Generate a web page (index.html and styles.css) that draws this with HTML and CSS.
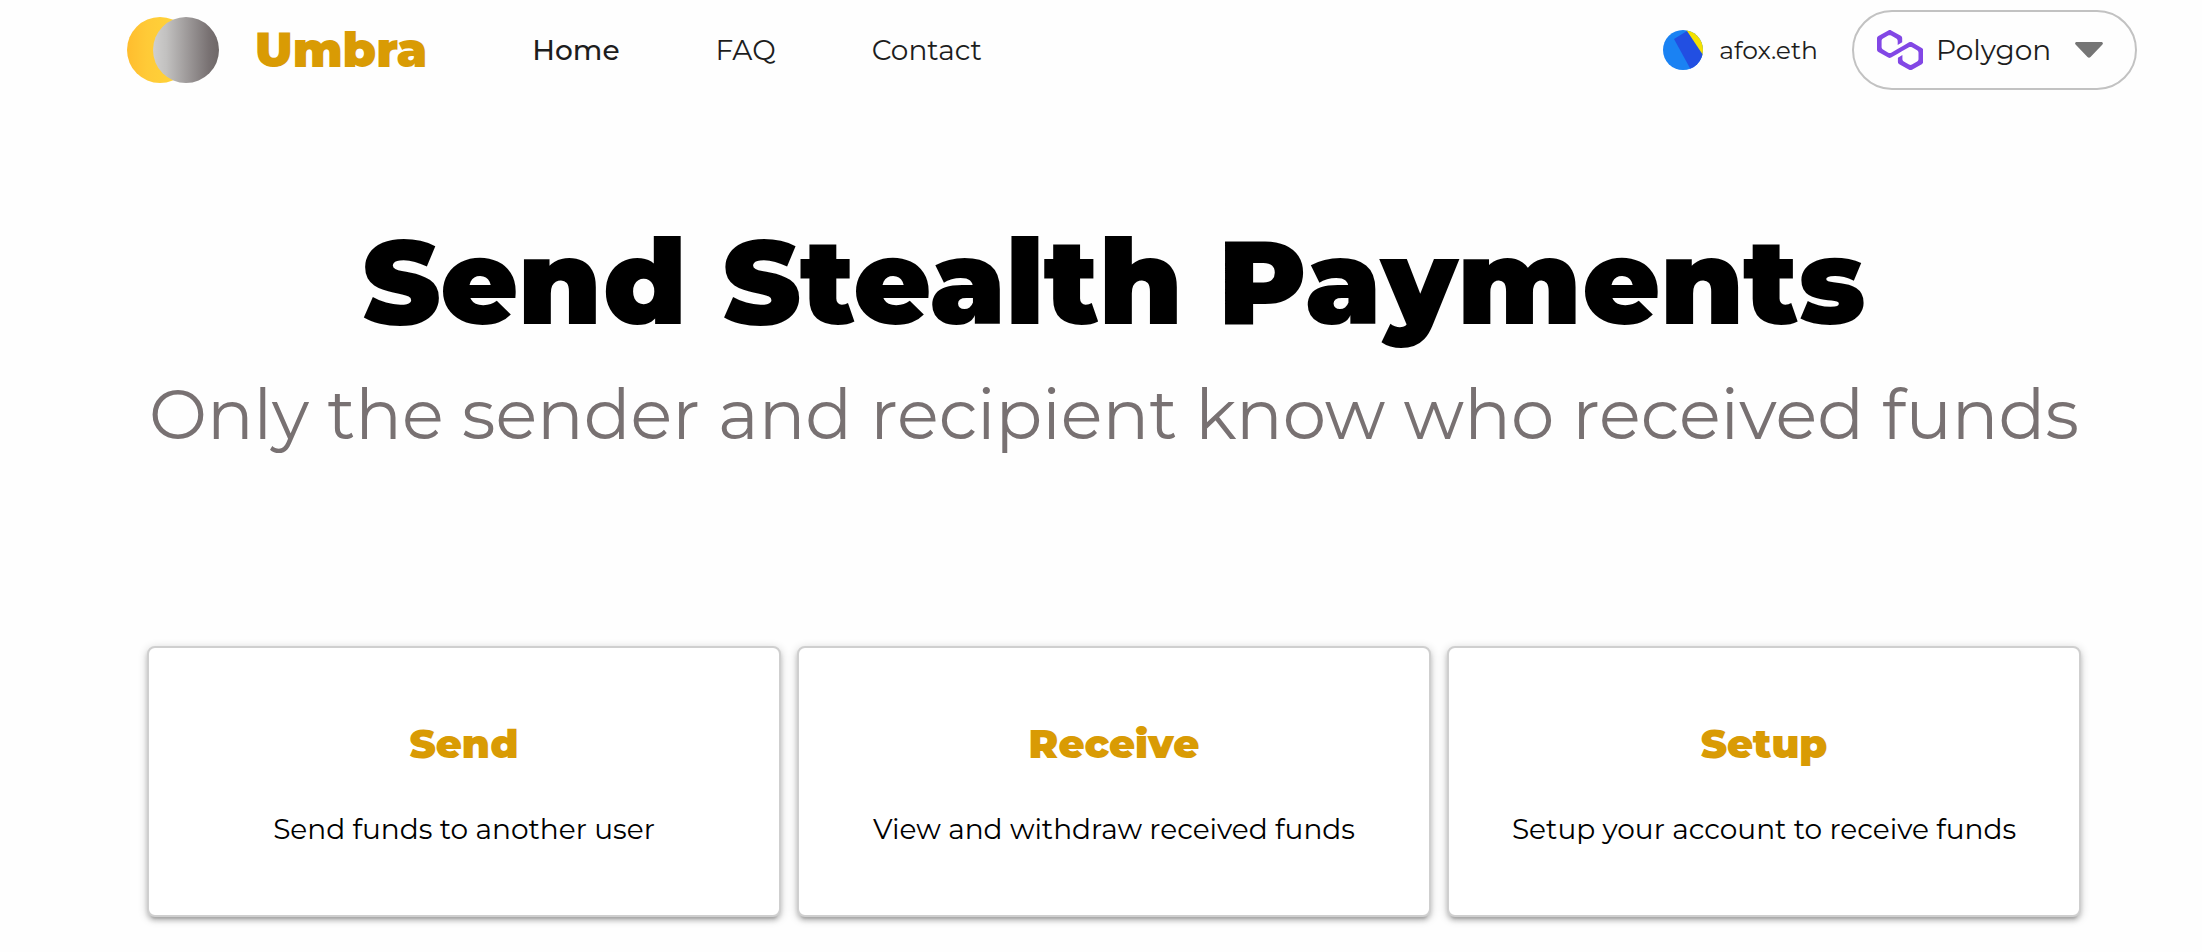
FILE: index.html
```
<!DOCTYPE html>
<html lang="en">
<head>
    <meta charset="UTF-8">
    <meta name="viewport" content="width=device-width, initial-scale=1.0">
    <title>Umbra</title>
    <link rel="stylesheet" href="styles.css">
</head>
<body>
    <header class="header">
        <a class="brand" href="#">
            <svg class="brand-logo" viewBox="0 0 92 66" aria-hidden="true">
                <defs>
                    <linearGradient id="sun">
                        <stop offset="0" stop-color="#ffbd2e"/>
                        <stop offset="0.3" stop-color="#ffca37"/>
                        <stop offset="1" stop-color="#ffd83a"/>
                    </linearGradient>
                    <linearGradient id="moon">
                        <stop offset="0" stop-color="#d0cfce"/>
                        <stop offset="0.2" stop-color="#c2c1c0"/>
                        <stop offset="0.85" stop-color="#787172"/>
                        <stop offset="1" stop-color="#6f6868"/>
                    </linearGradient>
                </defs>
                <circle cx="33" cy="33" r="33" fill="url(#sun)"/>
                <circle cx="59" cy="33" r="33" fill="url(#moon)"/>
            </svg>
            <span class="brand-name">Umbra</span>
        </a>

        <nav class="nav">
            <a class="nav-link active" href="#">Home</a>
            <a class="nav-link" href="#">FAQ</a>
            <a class="nav-link" href="#">Contact</a>
        </nav>

        <div class="account">
            <svg class="avatar" viewBox="0 0 40 40" aria-hidden="true">
                <defs>
                    <clipPath id="avatarClip"><circle cx="20" cy="20" r="20"/></clipPath>
                </defs>
                <g clip-path="url(#avatarClip)">
                    <rect width="40" height="40" fill="#1a82f3"/>
                    <path d="M23 0h17v27z" fill="#f5e100"/>
                    <path d="M11 9 24 1 42 28 40 40H28z" fill="#224fe2"/>
                </g>
            </svg>
            <span class="account-name">afox.eth</span>
        </div>

        <div class="network">
            <svg class="network-logo" viewBox="0 0 46 40" fill="#8247e5" aria-hidden="true">
                <path d="M35 12.3c-.8-.5-1.900-.5-2.900 0L25.400 16.200l-4.500 2.600-6.700 3.900c-.8.5-1.900.5-2.900 0L6 19.600c-.8-.5-1.400-1.400-1.400-2.500v-6.100c0-1 .5-2 1.400-2.500l5.200-3c.8-.5 1.900-.5 2.900 0l5.200 3c.8.5 1.400 1.400 1.400 2.500v3.900l4.500-2.700V8.300c0-1-.5-2-1.400-2.500L14.200.4c-.8-.5-1.900-.5-2.900 0L1.400 5.900C.5 6.400 0 7.300 0 8.300v11.200c0 1 .5 2 1.400 2.500l9.800 5.600c.8.500 1.900.5 2.900 0l6.700-3.800 4.500-2.700 6.700-3.800c.8-.5 1.900-.5 2.900 0l5.200 3c.8.5 1.400 1.400 1.400 2.500v6.100c0 1-.5 2-1.400 2.500l-5.200 3.100c-.8.5-1.900.5-2.900 0l-5.200-3c-.8-.5-1.400-1.400-1.400-2.500v-3.900l-4.500 2.700v3.900c0 1 .5 2 1.400 2.500l9.800 5.600c.8.5 1.900.5 2.900 0l9.800-5.600c.8-.5 1.400-1.400 1.400-2.500V20.400c0-1-.5-2-1.400-2.500z"/>
            </svg>
            <select class="network-select" aria-label="Network">
                <option>Polygon</option>
            </select>
            <svg class="network-arrow" viewBox="0 0 28 16" aria-hidden="true">
                <path d="M2 0h24c2 0 2.500 1.500 1.200 2.700L15.500 15c-1 1-2 1-3 0L.8 2.700C-.5 1.500 0 0 2 0z" fill="#757575"/>
            </svg>
        </div>
    </header>

    <main class="page">
        <h1 class="title">Send Stealth Payments</h1>
        <p class="subtitle">Only the sender and recipient know who received funds</p>

        <div class="cards">
            <a class="card" href="#">
                <h2 class="card-title">Send</h2>
                <p class="card-text">Send funds to another user</p>
            </a>
            <a class="card" href="#">
                <h2 class="card-title">Receive</h2>
                <p class="card-text">View and withdraw received funds</p>
            </a>
            <a class="card" href="#">
                <h2 class="card-title">Setup</h2>
                <p class="card-text">Setup your account to receive funds</p>
            </a>
        </div>
    </main>
</body>
</html>
```
FILE: styles.css
```
* {
    box-sizing: border-box;
}
body {
    margin: 0;
    font-family: Montserrat, Inter, sans-serif;
    font-size: 28px;
    line-height: 40px;
    background-color: #fefefe;
    color: #1d1d1d;
}
a {
    color: inherit;
    text-decoration: none;
}
.header {
    display: flex;
    align-items: center;
    padding: 10px 65px 10px 127px;
}
.brand {
    display: flex;
    align-items: center;
    gap: 36px;
}
.brand-logo {
    width: 92px;
    height: 66px;
}
.brand-name {
    font-size: 48px;
    font-weight: 900;
    color: #d99b04;
}
.nav {
    display: flex;
    gap: 96px;
    margin-left: 105px;
}
.nav-link.active {
    font-weight: 500;
}
.account {
    display: flex;
    align-items: center;
    gap: 16px;
    margin-left: auto;
}
.avatar {
    width: 40px;
    height: 40px;
}
.account-name {
    font-size: 25px;
}
.network {
    display: flex;
    align-items: center;
    margin-left: 34px;
    height: 80px;
    padding: 0 32px 0 23px;
    border: 2px solid #c2c2c2;
    border-radius: 40px;
}
.network-logo {
    width: 46px;
    height: 40px;
}
.network-select {
    margin: 0 23px 0 13px;
    padding: 0;
    border: none;
    background: none;
    font: inherit;
    color: inherit;
    appearance: none;
    cursor: pointer;
}
.network-arrow {
    width: 28px;
    height: 16px;
}
.page {
    padding: 110px 121px 24px 147px;
    text-align: center;
}
.title {
    margin: 0;
    font-size: 119px;
    font-weight: 900;
    line-height: 144px;
    color: #000;
}
.subtitle {
    margin: 16px 0 0;
    font-size: 69px;
    font-weight: 400;
    line-height: 88px;
    color: #787172;
}
.cards {
    display: grid;
    grid-template-columns: repeat(3, 1fr);
    gap: 16px;
    margin-top: 188px;
}
.card {
    padding: 68px 24px 66px;
    border: 2px solid #cfcfcf;
    border-radius: 8px;
    background-color: #fff;
    box-shadow: 0 2px 10px rgba(0, 0, 0, 0.2), 0 4px 4px rgba(0, 0, 0, 0.14), 0 6px 2px -4px rgba(0, 0, 0, 0.12);
    color: #000;
}
.card-title {
    margin: 0;
    font-size: 40px;
    font-weight: 900;
    line-height: 56px;
    color: #d99b04;
}
.card-text {
    margin: 37px 0 0;
}
```
